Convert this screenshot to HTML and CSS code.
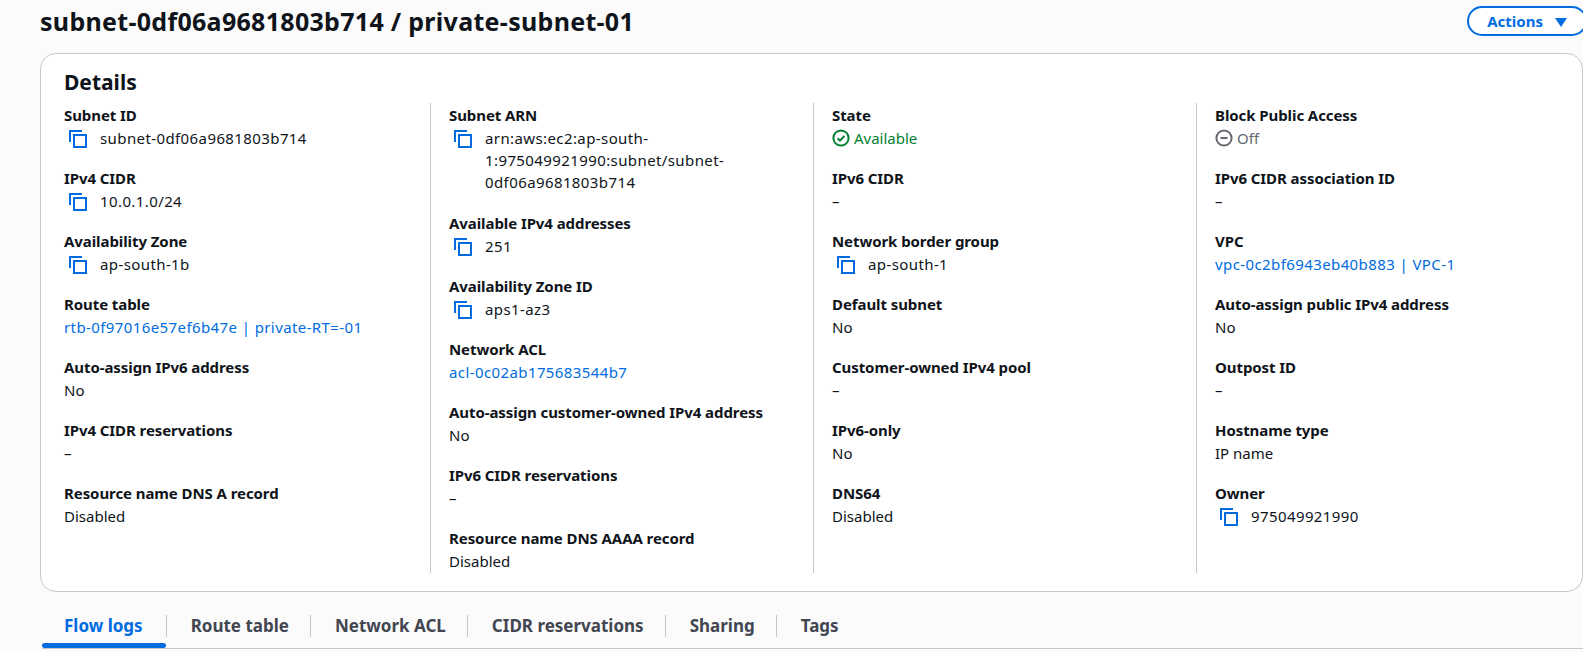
FILE: index.html
```html
<!DOCTYPE html>
<html lang="en">
<head>
    <meta charset="UTF-8">
    <title>subnet-0df06a9681803b714 / private-subnet-01</title>
    <link rel="stylesheet" href="styles.css">
</head>
<body>
    <svg class="sprite" width="0" height="0">
        <symbol id="copy" viewBox="0 0 18 18">
            <path d="M1 12V1h12" fill="none" stroke="currentColor" stroke-width="2"/>
            <rect x="5" y="5" width="12" height="12" fill="none" stroke="currentColor" stroke-width="2"/>
        </symbol>
    </svg>

    <header class="page-head">
        <h1>subnet-0df06a9681803b714 / private-subnet-01</h1>
        <button class="actions">Actions <span class="caret"></span></button>
    </header>

    <section class="card">
        <h2>Details</h2>
        <div class="columns">
            <div class="col">
                <div class="field"><div class="label">Subnet ID</div><div class="value copy id"><svg class="icon"><use href="#copy"/></svg><span>subnet-0df06a9681803b714</span></div></div>
                <div class="field"><div class="label">IPv4 CIDR</div><div class="value copy id"><svg class="icon"><use href="#copy"/></svg><span>10.0.1.0/24</span></div></div>
                <div class="field"><div class="label">Availability Zone</div><div class="value copy id"><svg class="icon"><use href="#copy"/></svg><span>ap-south-1b</span></div></div>
                <div class="field"><div class="label">Route table</div><div class="value id"><a href="#">rtb-0f97016e57ef6b47e | private-RT=-01</a></div></div>
                <div class="field"><div class="label">Auto-assign IPv6 address</div><div class="value">No</div></div>
                <div class="field"><div class="label">IPv4 CIDR reservations</div><div class="value">–</div></div>
                <div class="field"><div class="label">Resource name DNS A record</div><div class="value">Disabled</div></div>
            </div>
            <div class="col">
                <div class="field arn"><div class="label">Subnet ARN</div><div class="value copy id"><svg class="icon"><use href="#copy"/></svg><span>arn:aws:ec2:ap-south-1:975049921990:subnet/subnet-0df06a9681803b714</span></div></div>
                <div class="field"><div class="label">Available IPv4 addresses</div><div class="value copy id"><svg class="icon"><use href="#copy"/></svg><span>251</span></div></div>
                <div class="field"><div class="label">Availability Zone ID</div><div class="value copy id"><svg class="icon"><use href="#copy"/></svg><span>aps1-az3</span></div></div>
                <div class="field"><div class="label">Network ACL</div><div class="value id"><a href="#">acl-0c02ab175683544b7</a></div></div>
                <div class="field"><div class="label">Auto-assign customer-owned IPv4 address</div><div class="value">No</div></div>
                <div class="field"><div class="label">IPv6 CIDR reservations</div><div class="value">–</div></div>
                <div class="field"><div class="label">Resource name DNS AAAA record</div><div class="value">Disabled</div></div>
            </div>
            <div class="col">
                <div class="field"><div class="label">State</div><div class="value status ok"><svg class="status-icon" viewBox="0 0 18 18"><circle cx="9" cy="9" r="7.6" fill="none" stroke="currentColor" stroke-width="2"/><path d="M5.6 9.2l2.4 2.4 4.4-4.6" fill="none" stroke="currentColor" stroke-width="2"/></svg>Available</div></div>
                <div class="field"><div class="label">IPv6 CIDR</div><div class="value">–</div></div>
                <div class="field"><div class="label">Network border group</div><div class="value copy id"><svg class="icon"><use href="#copy"/></svg><span>ap-south-1</span></div></div>
                <div class="field"><div class="label">Default subnet</div><div class="value">No</div></div>
                <div class="field"><div class="label">Customer-owned IPv4 pool</div><div class="value">–</div></div>
                <div class="field"><div class="label">IPv6-only</div><div class="value">No</div></div>
                <div class="field"><div class="label">DNS64</div><div class="value">Disabled</div></div>
            </div>
            <div class="col">
                <div class="field"><div class="label">Block Public Access</div><div class="value status off"><svg class="status-icon" viewBox="0 0 18 18"><circle cx="9" cy="9" r="7.6" fill="none" stroke="currentColor" stroke-width="2"/><path d="M5.5 9h7" fill="none" stroke="currentColor" stroke-width="2"/></svg>Off</div></div>
                <div class="field"><div class="label">IPv6 CIDR association ID</div><div class="value">–</div></div>
                <div class="field"><div class="label">VPC</div><div class="value id"><a href="#">vpc-0c2bf6943eb40b883 | VPC-1</a></div></div>
                <div class="field"><div class="label">Auto-assign public IPv4 address</div><div class="value">No</div></div>
                <div class="field"><div class="label">Outpost ID</div><div class="value">–</div></div>
                <div class="field"><div class="label">Hostname type</div><div class="value">IP name</div></div>
                <div class="field"><div class="label">Owner</div><div class="value copy id"><svg class="icon"><use href="#copy"/></svg><span>975049921990</span></div></div>
            </div>
        </div>
    </section>

    <nav class="tabs">
        <a class="tab active" href="#">Flow logs</a>
        <a class="tab" href="#">Route table</a>
        <a class="tab" href="#">Network ACL</a>
        <a class="tab" href="#">CIDR reservations</a>
        <a class="tab" href="#">Sharing</a>
        <a class="tab" href="#">Tags</a>
    </nav>
</body>
</html>
```

FILE: styles.css
```css
html, body {
    height: 652px;
    overflow: hidden;
}
body {
    margin: 0;
    padding: 0 0 0 40px;
    background-color: #fbfbfc;
    color: #0f141a;
    font-family: "Noto Sans", "Open Sans", sans-serif;
    font-size: 15px;
    line-height: 22px;
}
.sprite {
    position: absolute;
}
.page-head {
    display: flex;
    justify-content: space-between;
    align-items: center;
    height: 42px;
    margin-bottom: 11px;
}
h1 {
    margin: 0;
    font-size: 25px;
    letter-spacing: 0.3px;
    line-height: 42px;
    font-weight: 700;
}
.actions {
    width: 120px;
    height: 30px;
    margin: -1px -4px 0 0;
    padding: 0;
    background: #fff;
    color: #006ce0;
    border: 2px solid #006ce0;
    border-radius: 15px;
    font-family: inherit;
    font-size: 15px;
    font-weight: 700;
}
.caret {
    display: inline-block;
    width: 0;
    height: 0;
    margin-left: 8px;
    border-left: 6px solid transparent;
    border-right: 6px solid transparent;
    border-top: 9px solid #006ce0;
}
.card {
    box-sizing: border-box;
    height: 539px;
    background: #fff;
    border: 1px solid #c6c6cd;
    border-radius: 16px;
    padding: 13px 0 0 23px;
}
h2 {
    margin: 0 0 6px;
    font-size: 21px;
    line-height: 30px;
    font-weight: 700;
}
.columns {
    display: flex;
    height: 470px;
}
.col {
    box-sizing: border-box;
    width: 383px;
    padding: 1px 18px 0;
    border-left: 1px solid #c6c6cd;
}
.col:first-child {
    border-left: 0;
    width: 366px;
    padding-left: 0;
}
.field {
    margin-bottom: 18px;
}
.arn {
    margin-bottom: 19px;
}
.label {
    font-weight: 700;
    letter-spacing: -0.08px;
    margin-bottom: 1px;
}
.id {
    letter-spacing: 0.4px;
}
.copy {
    display: flex;
    align-items: flex-start;
}
.icon {
    flex: none;
    width: 18px;
    height: 18px;
    margin: 3px 13px 0 5px;
    color: #006ce0;
}
a {
    color: #006ce0;
    text-decoration: none;
}
.status {
    display: flex;
    align-items: center;
}
.status-icon {
    width: 18px;
    height: 18px;
    margin-right: 4px;
}
.ok {
    color: #00802f;
}
.off {
    color: #656871;
}
.tabs {
    display: flex;
    height: 57px;
    margin: 0 0 0 2px;
    border-bottom: 1px solid #c6c6cd;
    box-sizing: border-box;
    padding-top: 23px;
    align-items: flex-start;
}
.tab {
    position: relative;
    height: 22px;
    padding: 0 21px 0 24px;
    color: #424650;
    font-size: 17px;
    font-weight: 700;
    line-height: 22px;
    border-left: 1px solid #c6c6cd;
}
.tab:first-child {
    border-left: 0;
    padding: 0 23px 0 22px;
}
.tab.active {
    color: #006ce0;
}
.tab.active::after {
    content: "";
    position: absolute;
    left: 0;
    right: 0;
    bottom: -11px;
    height: 5px;
    border-radius: 3px;
    background: #006ce0;
}
```
